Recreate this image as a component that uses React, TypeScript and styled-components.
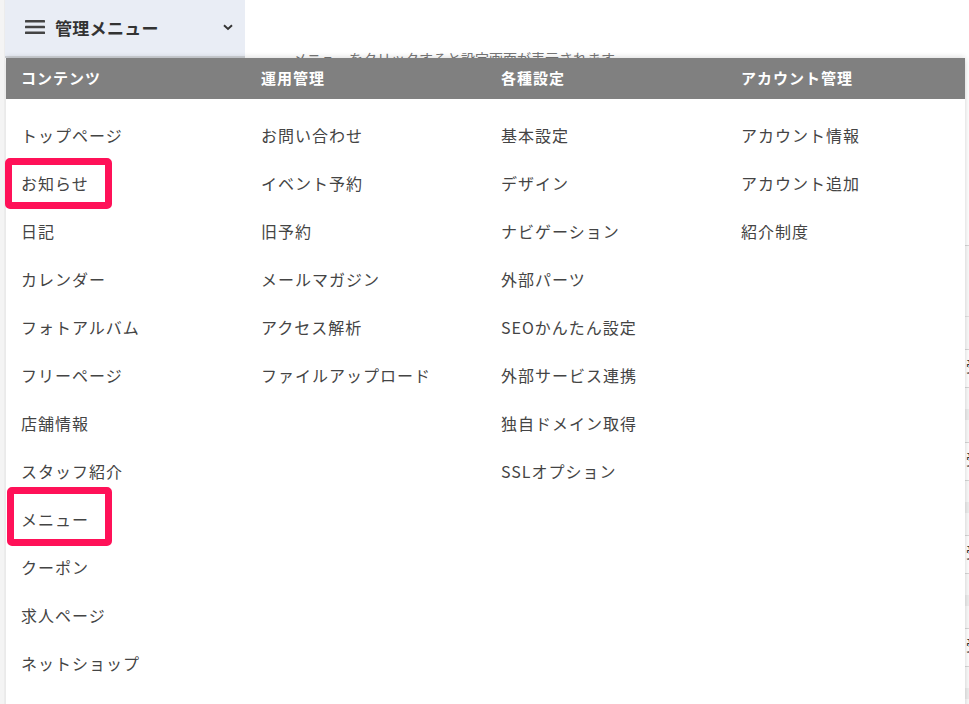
import React from "react";
import styled, { createGlobalStyle } from "styled-components";

const Global = createGlobalStyle`
  html, body { margin: 0; padding: 0; background: #fff; }
  body {
    font-family: "Noto Sans CJK JP", "Noto Sans", sans-serif;
    color: #333;
    overflow: hidden;
  }
  #root { height: 704px; }
`;

const Page = styled.div`
  display: flex;
  width: 969px;
  height: 704px;
  overflow: hidden;
  position: relative;
`;

const Rail = styled.div`
  width: 5px;
  flex: none;
  background: #f4f4f4;
  border-right: 1px solid #ececec;
  box-sizing: border-box;
`;

const Main = styled.div`
  flex: 1;
  display: flex;
  flex-direction: column;
  position: relative;
  overflow: hidden;
`;

const TopRow = styled.div`
  display: flex;
  align-items: flex-start;
  height: 58px;
  flex: none;
`;

const MenuButton = styled.div`
  width: 240px;
  height: 58px;
  box-sizing: border-box;
  background: #e9edf5;
  border-bottom: 2px solid #d0d3d8;
  display: flex;
  align-items: center;
  padding: 0 12px 2px 20px;
  gap: 10px;
`;

const Title = styled.span`
  flex: 1;
  font-size: 17px;
  font-weight: 700;
  color: #333;
  letter-spacing: 0.3px;
`;

const Behind = styled.div`
  flex: 1;
  display: flex;
  flex-direction: column;
`;

const BehindText = styled.div`
  margin: 48px 0 0 48px;
  font-size: 14px;
  color: #777;
  white-space: nowrap;
`;

const Table = styled.div`
  margin: 187px 0 0 30px;
  border-top: 1px solid #d8d8d8;
  display: flex;
  flex-direction: column;
  background: #fafafa;
`;

const FirstRow = styled.div`
  height: 103px;
  border-bottom: 1px solid #d8d8d8;
  display: flex;
  flex-direction: column;
`;

const Divider = styled.div`
  height: 70px;
  border-bottom: 1px solid #e2e2e2;
`;

const TableRow = styled.div`
  height: 92px;
  border-bottom: 1px solid #d8d8d8;
  display: flex;
  flex-direction: column;
`;

const RowHead = styled.div`
  height: 37px;
  border-bottom: 1px solid #d8d8d8;
  background: #fff;
  font-size: 15px;
  line-height: 32px;
  color: #333;
  padding-left: 931px;
  white-space: nowrap;
`;

const Band = styled.div`
  margin-top: 21px;
  height: 11px;
  background: #eeeeee;
`;

const Panel = styled.div`
  position: absolute;
  top: 58px;
  left: 1px;
  width: 959px;
  height: 700px;
  background: #fff;
  box-shadow: 0 -2px 5px rgba(0, 0, 0, 0.08), 0 2px 6px rgba(0, 0, 0, 0.12);
  z-index: 5;
`;

const HeadBar = styled.div`
  display: grid;
  grid-template-columns: repeat(4, 240px);
  height: 41px;
  background: #808080;
  align-items: center;
`;

const Head = styled.div`
  padding-left: 15px;
  font-size: 15px;
  font-weight: 700;
  color: #fff;
  letter-spacing: 1px;
  line-height: 1;
  padding-bottom: 2px;
`;

const Body = styled.div`
  display: grid;
  grid-template-columns: repeat(4, 240px);
  padding-top: 12px;
`;

const Column = styled.div`
  display: flex;
  flex-direction: column;
`;

const Item = styled.div`
  position: relative;
  height: 48px;
  display: flex;
  align-items: center;
  padding-left: 15px;
  font-size: 16px;
  letter-spacing: 1px;
  color: #444;
  white-space: nowrap;
`;

const Mark = styled.span<{ $l: number; $t: number; $w: number; $h: number }>`
  position: absolute;
  left: ${(p) => p.$l}px;
  top: ${(p) => p.$t}px;
  width: ${(p) => p.$w}px;
  height: ${(p) => p.$h}px;
  box-sizing: border-box;
  border: 7px solid #ff1158;
  border-radius: 5px;
  pointer-events: none;
`;

const Hamburger = () => (
  <svg width="20" height="14" viewBox="0 0 20 14" style={{ flex: "none" }}>
    <rect x="0" y="0" width="20" height="2.6" rx="0.6" fill="#444" />
    <rect x="0" y="5.7" width="20" height="2.6" rx="0.6" fill="#444" />
    <rect x="0" y="11.4" width="20" height="2.6" rx="0.6" fill="#444" />
  </svg>
);

const Chevron = () => (
  <svg width="10" height="7" viewBox="0 0 10 7" style={{ flex: "none" }}>
    <path d="M1 1.2 L5 5 L9 1.2" fill="none" stroke="#333" strokeWidth="1.9" />
  </svg>
);

type Entry = { label: string; mark?: { l: number; t: number; w: number; h: number } };

const columns: { head: string; items: Entry[] }[] = [
  {
    head: "コンテンツ",
    items: [
      { label: "トップページ" },
      { label: "お知らせ", mark: { l: -1, t: -1, w: 107, h: 51 } },
      { label: "日記" },
      { label: "カレンダー" },
      { label: "フォトアルバム" },
      { label: "フリーページ" },
      { label: "店舗情報" },
      { label: "スタッフ紹介" },
      { label: "メニュー", mark: { l: 1, t: -8, w: 105, h: 59 } },
      { label: "クーポン" },
      { label: "求人ページ" },
      { label: "ネットショップ" },
    ],
  },
  {
    head: "運用管理",
    items: [
      { label: "お問い合わせ" },
      { label: "イベント予約" },
      { label: "旧予約" },
      { label: "メールマガジン" },
      { label: "アクセス解析" },
      { label: "ファイルアップロード" },
    ],
  },
  {
    head: "各種設定",
    items: [
      { label: "基本設定" },
      { label: "デザイン" },
      { label: "ナビゲーション" },
      { label: "外部パーツ" },
      { label: "SEOかんたん設定" },
      { label: "外部サービス連携" },
      { label: "独自ドメイン取得" },
      { label: "SSLオプション" },
    ],
  },
  {
    head: "アカウント管理",
    items: [{ label: "アカウント情報" }, { label: "アカウント追加" }, { label: "紹介制度" }],
  },
];

const rows = ["受", "受", "受", "受"];

export default function App() {
  return (
    <>
      <Global />
      <Page>
        <Rail />
        <Main>
          <TopRow>
            <MenuButton>
              <Hamburger />
              <Title>管理メニュー</Title>
              <Chevron />
            </MenuButton>
            <Behind>
              <BehindText>メニューをクリックすると設定画面が表示されます。</BehindText>
            </Behind>
          </TopRow>
          <Table>
            <FirstRow>
              <Divider />
            </FirstRow>
            {rows.map((r, i) => (
              <TableRow key={i}>
                <RowHead>{r}</RowHead>
                <Band />
              </TableRow>
            ))}
          </Table>
          <Panel>
            <HeadBar>
              {columns.map((c) => (
                <Head key={c.head}>{c.head}</Head>
              ))}
            </HeadBar>
            <Body>
              {columns.map((c) => (
                <Column key={c.head}>
                  {c.items.map((it) => (
                    <Item key={it.label}>
                      {it.label}
                      {it.mark && <Mark $l={it.mark.l} $t={it.mark.t} $w={it.mark.w} $h={it.mark.h} />}
                    </Item>
                  ))}
                </Column>
              ))}
            </Body>
          </Panel>
        </Main>
      </Page>
    </>
  );
}
